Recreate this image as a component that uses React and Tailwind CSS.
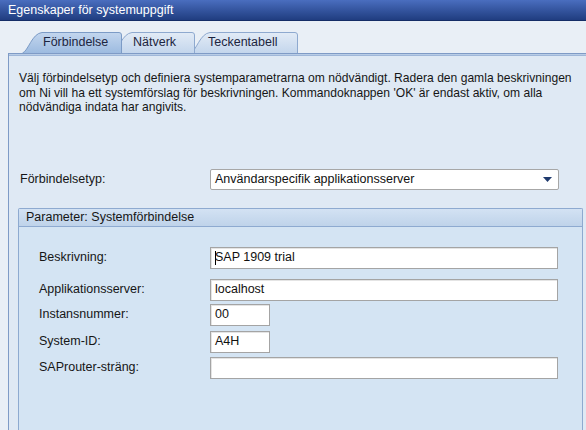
import React from "react";

function Tab({ label, width, slant = 18, active, z, ml, pl }) {
  const h = 21;
  const d = `M0.5 ${h} C ${slant * 0.35} ${h - 2} ${slant * 0.55} 1.5 ${slant + 2} 0.5 L ${width - 3} 0.5 Q ${width - 0.5} 0.5 ${width - 0.5} 3 L ${width - 0.5} ${h}`;
  const gid = `g-${label}`;
  return (
    <div className={`relative h-[21px] flex items-center ${z} ${ml}`} style={{ width }}>
      <svg className="absolute inset-0" width={width} height={h} viewBox={`0 0 ${width} ${h}`}>
        <defs>
          <linearGradient id={gid} x1="0" y1="0" x2="0" y2="1">
            {active ? (
              <>
                <stop offset="0" stopColor="#c3d6ee" />
                <stop offset="1" stopColor="#9dbbe0" />
              </>
            ) : (
              <>
                <stop offset="0" stopColor="#e2ebf6" />
                <stop offset="1" stopColor="#c4d6ec" />
              </>
            )}
          </linearGradient>
        </defs>
        <path d={d} fill={`url(#${gid})`} stroke={active ? "#7c9bc6" : "#8ea9cf"} strokeWidth="1" />
      </svg>
      <span className={`relative text-[12.5px] leading-none text-[#1c2540] ${pl}`}>{label}</span>
    </div>
  );
}

function Field({ label, width, value, mt, cursor }) {
  return (
    <div className={`flex items-center ${mt}`}>
      <div className="w-[191px] pl-[20px] text-[12.5px] text-[#161616]">{label}</div>
      <div
        className={`h-[22px] ${width} bg-white border border-[#a4a4a4] shadow-[inset_1px_1px_0_#e4e4e4] flex items-center pl-[4px] text-[12.5px] text-[#111]`}
      >
        {cursor && <span className="inline-block w-[1px] h-[14px] bg-black mr-[-1px]" />}
        {value}
      </div>
    </div>
  );
}

export default function App() {
  return (
    <div
      className="w-[586px] h-[430px] overflow-hidden flex flex-col bg-[#e9eff6]"
      style={{ fontFamily: '"Liberation Sans", Arial, sans-serif' }}
    >
      <div className="h-[21px] shrink-0 bg-gradient-to-b from-[#4a6ebf] to-[#203d80] border-b border-[#152d66] flex items-center pl-[8px] text-white text-[12.5px]">
        Egenskaper för systemuppgift
      </div>

      <div className="flex mt-[11px] h-[21px] shrink-0">
        <Tab label="Förbindelse" width={100} active z="z-30" ml="ml-[22px]" pl="pl-[21px]" />
        <Tab label="Nätverk" width={83} z="z-20" ml="ml-[-10px]" pl="pl-[21px]" />
        <Tab label="Teckentabell" width={108} z="z-10" ml="ml-[-5px]" pl="pl-[18px]" />
      </div>

      <div className="ml-[8px] flex-1 flex flex-col border-l border-t border-[#7f9bc6] bg-[#dfe9f4] relative z-40">
        <div className="h-[2px] bg-[#b9cde6] border-b border-[#9fb7d9]" />
        <div className="pl-[10px] pt-[15px] text-[12.1px] leading-[14.5px] text-[#161616] whitespace-nowrap">
          Välj förbindelsetyp och definiera systemparametrarna om nödvändigt. Radera den gamla beskrivningen
          <br />
          om Ni vill ha ett systemförslag för beskrivningen. Kommandoknappen 'OK' är endast aktiv, om alla
          <br />
          nödvändiga indata har angivits.
        </div>

        <div className="flex items-center mt-[54px]">
          <div className="w-[201px] pl-[11px] text-[12.5px] text-[#161616]">Förbindelsetyp:</div>
          <div className="w-[349px] h-[21px] bg-white border border-[#a7a7a7] rounded-[2px] flex items-center justify-between pl-[4px] pr-[6px] text-[12.5px] text-[#111]">
            <span>Användarspecifik applikationsserver</span>
            <svg width="9" height="5" viewBox="0 0 9 5">
              <path d="M0 0 H9 L4.5 5 Z" fill="#1f3a6e" />
            </svg>
          </div>
        </div>

        <div className="ml-[9px] mr-[3px] mt-[18px] flex-1 flex flex-col border border-b-0 border-[#8eaad0] rounded-t-[2px] bg-[#d4e4f3]">
          <div className="h-[18px] bg-gradient-to-b from-[#d3e2f3] to-[#bfd3ea] border-b border-[#8eaad0] flex items-center pl-[7px] text-[12.5px] text-[#161616]">
            Parameter: Systemförbindelse
          </div>
          <div className="flex flex-col pt-[20px]">
            <Field label="Beskrivning:" width="w-[348px]" value="SAP 1909 trial" mt="mt-0" cursor />
            <Field label="Applikationsserver:" width="w-[348px]" value="localhost" mt="mt-[10px]" />
            <Field label="Instansnummer:" width="w-[60px]" value="00" mt="mt-[3px]" />
            <Field label="System-ID:" width="w-[60px]" value="A4H" mt="mt-[5px]" />
            <Field label="SAProuter-sträng:" width="w-[348px]" value="" mt="mt-[4px]" />
          </div>
        </div>
      </div>
    </div>
  );
}
